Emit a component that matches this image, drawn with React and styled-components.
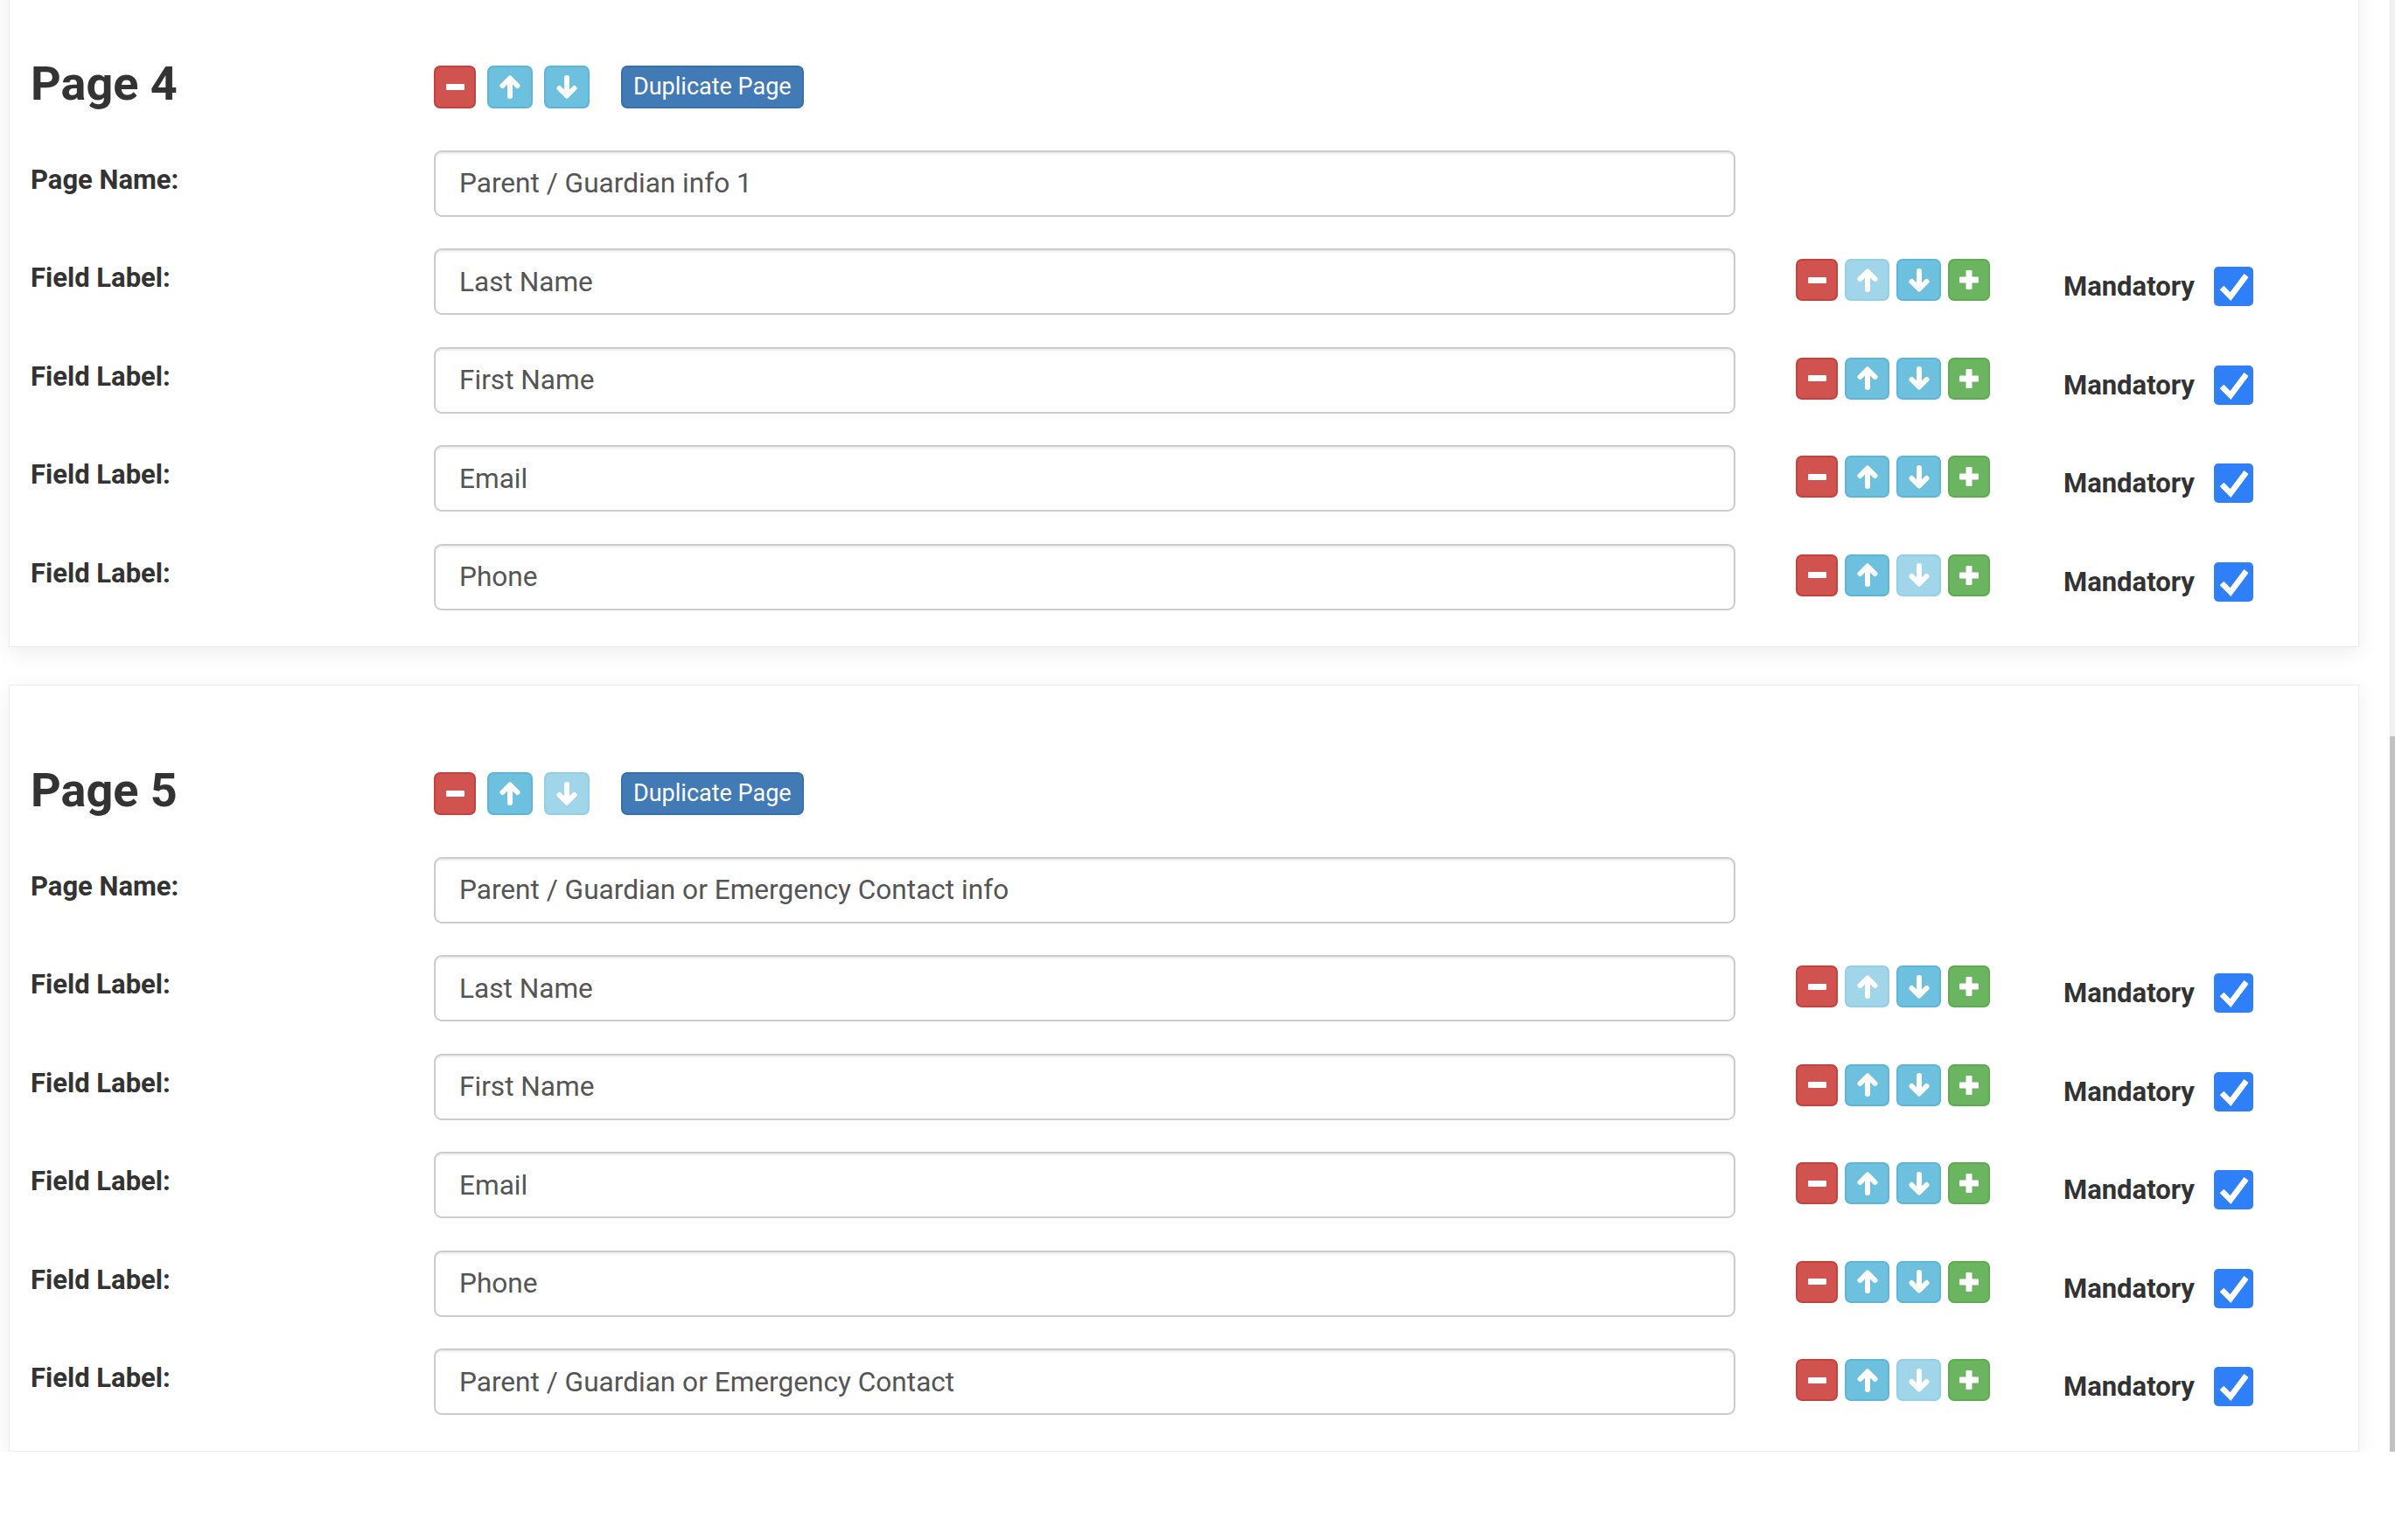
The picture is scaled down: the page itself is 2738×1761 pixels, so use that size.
import React from "react";
import styled, { createGlobalStyle } from "styled-components";

const GlobalStyle = createGlobalStyle`
  html, body {
    margin: 0;
    padding: 0;
    background: #fff;
  }
  body {
    font-family: Roboto, "Liberation Sans", Arial, sans-serif;
    color: #333;
  }
  * { box-sizing: border-box; }
`;

const pages = [
  {
    number: 4,
    name: "Parent / Guardian info 1",
    isLast: false,
    fields: ["Last Name", "First Name", "Email", "Phone"],
  },
  {
    number: 5,
    name: "Parent / Guardian or Emergency Contact info",
    isLast: true,
    fields: [
      "Last Name",
      "First Name",
      "Email",
      "Phone",
      "Parent / Guardian or Emergency Contact",
    ],
  },
];

const colors = {
  danger: { bg: "#d0534f", border: "#c6403c" },
  info: { bg: "#6ec0df", border: "#5db6d7" },
  success: { bg: "#6cb560", border: "#5eab52" },
  primary: { bg: "#417ab5", border: "#3770ab" },
};

function MinusIcon() {
  return (
    <svg width="21" height="7" viewBox="0 0 21 7">
      <rect x="0" y="0" width="21" height="7" rx="1" fill="#fff" />
    </svg>
  );
}

function PlusIcon() {
  return (
    <svg width="22" height="22" viewBox="0 0 22 22">
      <rect x="0" y="7.5" width="22" height="7" rx="1" fill="#fff" />
      <rect x="7.5" y="0" width="7" height="22" rx="1" fill="#fff" />
    </svg>
  );
}

function ArrowIcon({ down }) {
  return (
    <svg
      width="24"
      height="27"
      viewBox="0 0 24 27"
      style={down ? { transform: "rotate(180deg)" } : undefined}
    >
      <g stroke="#fff" strokeWidth="6" strokeLinecap="round" strokeLinejoin="round" fill="none">
        <path d="M12 24V7" />
        <path d="M3.5 12L12 3.5L20.5 12" />
      </g>
    </svg>
  );
}

function CheckIcon() {
  return (
    <svg width="45" height="45" viewBox="0 0 45 45">
      <polyline
        points="9,24 19,34 37,10"
        fill="none"
        stroke="#fff"
        strokeWidth="6.5"
        strokeLinejoin="miter"
      />
    </svg>
  );
}

export default function App() {
  return (
    <>
      <GlobalStyle />
      <Frame>
        <Viewport>
          {pages.map((page) => (
            <Card key={page.number}>
              <CardHeader>
                <PageTitle>Page {page.number}</PageTitle>
                <HeaderButtons>
                  <IconButton $variant="danger" $w={48} $h={49}>
                    <MinusIcon />
                  </IconButton>
                  <IconButton $variant="info" $w={52} $h={49}>
                    <ArrowIcon />
                  </IconButton>
                  <IconButton $variant="info" $w={52} $h={49} $disabled={page.isLast}>
                    <ArrowIcon down />
                  </IconButton>
                  <DuplicateButton>Duplicate Page</DuplicateButton>
                </HeaderButtons>
              </CardHeader>

              <Rows>
                <FieldRow>
                  <FieldLabel>Page Name:</FieldLabel>
                  <TextInput type="text" defaultValue={page.name} />
                </FieldRow>

                {page.fields.map((field, i) => (
                  <FieldRow key={i}>
                    <FieldLabel>Field Label:</FieldLabel>
                    <TextInput type="text" defaultValue={field} />
                    <RowActions>
                      <IconButton $variant="danger" $w={48} $h={48}>
                        <MinusIcon />
                      </IconButton>
                      <IconButton $variant="info" $w={51} $h={48} $disabled={i === 0}>
                        <ArrowIcon />
                      </IconButton>
                      <IconButton
                        $variant="info"
                        $w={51}
                        $h={48}
                        $disabled={i === page.fields.length - 1}
                      >
                        <ArrowIcon down />
                      </IconButton>
                      <IconButton $variant="success" $w={48} $h={48}>
                        <PlusIcon />
                      </IconButton>
                    </RowActions>
                    <Mandatory>
                      <MandatoryText>Mandatory</MandatoryText>
                      <CheckBox role="checkbox" aria-checked="true">
                        <CheckIcon />
                      </CheckBox>
                    </Mandatory>
                  </FieldRow>
                ))}
              </Rows>
            </Card>
          ))}
        </Viewport>
        <ScrollTrack>
          <ScrollThumb />
        </ScrollTrack>
      </Frame>
    </>
  );
}

const Frame = styled.div`
  position: relative;
  width: 100%;
  height: 1660px;
`;

const Viewport = styled.div`
  height: 1660px;
  overflow: hidden;
  display: flex;
  flex-direction: column;
  justify-content: flex-end;
  gap: 43px;
  padding: 0 41px 0 10px;
`;

const Card = styled.div`
  flex-shrink: 0;
  background: #fff;
  border: 1px solid #ececec;
  box-shadow: 0 6px 22px rgba(0, 0, 0, 0.07);
  padding: 93px 23px 41px 24px;
`;

const CardHeader = styled.div`
  display: flex;
  align-items: flex-start;
  margin-bottom: 48px;
`;

const PageTitle = styled.h3`
  margin: 0;
  width: 461px;
  font-size: 54px;
  line-height: 53px;
  font-weight: 700;
  color: #333;
`;

const HeaderButtons = styled.div`
  display: flex;
  align-items: center;
  gap: 13px;
  margin-top: 6px;
`;

const IconButton = styled.button`
  display: flex;
  align-items: center;
  justify-content: center;
  width: ${(p) => p.$w}px;
  height: ${(p) => p.$h}px;
  padding: 0;
  border-radius: 7px;
  border: 2px solid ${(p) => colors[p.$variant].border};
  background: ${(p) => colors[p.$variant].bg};
  opacity: ${(p) => (p.$disabled ? 0.65 : 1)};
  cursor: ${(p) => (p.$disabled ? "not-allowed" : "pointer")};
`;

const DuplicateButton = styled.button`
  height: 49px;
  margin-left: 23px;
  padding: 0 12px;
  border-radius: 7px;
  border: 2px solid ${colors.primary.border};
  background: ${colors.primary.bg};
  color: #fff;
  font-family: Roboto, "Liberation Sans", Arial, sans-serif;
  font-size: 27px;
  line-height: 1;
  cursor: pointer;
`;

const Rows = styled.div`
  display: flex;
  flex-direction: column;
  gap: 36.5px;
`;

const FieldRow = styled.div`
  display: flex;
  align-items: flex-start;
`;

const FieldLabel = styled.label`
  width: 461px;
  flex-shrink: 0;
  padding-top: 12px;
  font-size: 31px;
  line-height: 44px;
  font-weight: 700;
  color: #333;
`;

const TextInput = styled.input`
  width: 1488px;
  height: 76px;
  flex-shrink: 0;
  padding: 0 27px;
  border: 2px solid #cccccc;
  border-radius: 9px;
  box-shadow: inset 0 2px 2px rgba(0, 0, 0, 0.075);
  font-family: Roboto, "Liberation Sans", Arial, sans-serif;
  font-size: 31.6px;
  color: #555;
  background: #fff;
  outline: none;
`;

const RowActions = styled.div`
  display: flex;
  gap: 8px;
  margin-left: 69px;
  margin-top: 12px;
`;

const Mandatory = styled.div`
  display: flex;
  align-items: center;
  gap: 22px;
  margin-left: 84px;
  margin-top: 21px;
`;

const MandatoryText = styled.span`
  font-size: 31px;
  font-weight: 700;
  color: #333;
`;

const CheckBox = styled.span`
  display: block;
  width: 45px;
  height: 45px;
  border-radius: 5px;
  background: #2e7ff8;
  svg { display: block; }
`;

const ScrollTrack = styled.div`
  position: absolute;
  top: 0;
  right: 0;
  width: 6px;
  height: 100%;
  background: #f1f1f1;
`;

const ScrollThumb = styled.div`
  position: absolute;
  bottom: 0;
  left: 0;
  width: 6px;
  height: 818px;
  background: #c1c1c1;
`;
